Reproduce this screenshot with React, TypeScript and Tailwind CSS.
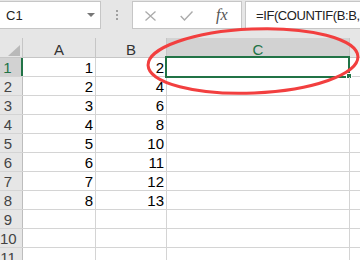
import React from "react";

const rows: [number | null, number | null][] = [
  [1, 2],
  [2, 4],
  [3, 6],
  [4, 8],
  [5, 10],
  [6, 11],
  [7, 12],
  [8, 13],
  [null, null],
  [null, null],
  [null, null],
];

const App = () => {
  return (
    <div className="relative h-[260px] w-[360px] overflow-hidden bg-white font-['Liberation_Sans',Arial,sans-serif] text-black">
      {/* name box + formula bar */}
      <div className="flex h-[38px] items-start bg-[#e6e6e6] pt-[1px]">
        <div className="flex h-[28px] w-[101px] shrink-0 items-center justify-between border-y border-r border-[#c6c6c6] bg-white pl-[6px] pr-[5px] text-[13px] text-[#222]">
          <span className="pt-[2px]">C1</span>
          <span className="h-0 w-0 border-x-[4px] border-t-[4px] border-x-transparent border-t-[#777]" />
        </div>
        <div className="flex h-[28px] w-[31px] shrink-0 flex-col items-center justify-center gap-[2px]">
          <span className="h-[2px] w-[2px] bg-[#a0a0a0]" />
          <span className="h-[2px] w-[2px] bg-[#a0a0a0]" />
          <span className="h-[2px] w-[2px] bg-[#a0a0a0]" />
        </div>
        <div className="flex h-[28px] w-[110px] shrink-0 items-center border border-[#c6c6c6] bg-white pl-[12px]">
          <svg width="11" height="10" viewBox="0 0 11 10" className="mt-[2px]">
            <path d="M0.5 0.5 L10.5 9.5 M10.5 0.5 L0.5 9.5" stroke="#ababab" strokeWidth="1.3" fill="none" />
          </svg>
          <svg width="13" height="10" viewBox="0 0 13 10" className="ml-[24px] mt-[2px]">
            <path d="M0.7 5 L4.5 9 L12.5 0.6" stroke="#ababab" strokeWidth="1.4" fill="none" />
          </svg>
          <span className="ml-[23px] font-['Liberation_Serif',serif] text-[16px] italic text-[#555]">fx</span>
        </div>
        <div className="ml-[3px] flex h-[28px] flex-1 items-center overflow-hidden whitespace-nowrap border-y border-l border-[#c6c6c6] bg-white pl-[10px] pt-[2px] text-[13px] tracking-[-0.4px] text-[#222]">
          =IF(COUNTIF(B:B,C1)&gt;0,&quot;&quot;)
        </div>
      </div>

      {/* column headers */}
      <div className="flex h-[20px] border-b border-[#c6c6c6] bg-[#e6e6e6] text-[15px] leading-[23px] text-[#333]">
        <div className="flex w-[23px] shrink-0 items-end justify-end border-r border-[#c6c6c6] pb-[1px] pr-[2px]">
          <svg width="12" height="11" viewBox="0 0 12 11">
            <polygon points="12,0 12,11 0,11" fill="#b9b9b9" />
          </svg>
        </div>
        <div className="w-[73px] shrink-0 border-r border-[#c6c6c6] text-center">A</div>
        <div className="w-[71px] shrink-0 border-r border-[#c6c6c6] text-center">B</div>
        <div className="w-[183px] shrink-0 border-r border-[#c6c6c6] bg-[#d2d2d2] text-center text-[#217346]">C</div>
        <div className="flex-1" />
      </div>

      {/* grid */}
      {rows.map(([a, b], i) => (
        <div key={i} className="flex h-[19px] border-b border-[#d4d4d4] text-[15px] leading-[20px]">
          <div
            className={
              i === 0
                ? "w-[23px] shrink-0 border-r-2 border-[#217346] bg-[#d2d2d2] pr-[6px] text-center text-[#217346]"
                : "w-[23px] shrink-0 border-r border-[#bdbdbd] bg-[#e6e6e6] pr-[6px] text-center text-[#444]"
            }
          >
            {i + 1}
          </div>
          <div className="w-[73px] shrink-0 border-r border-[#d4d4d4] pr-[2px] text-right">{a}</div>
          <div className="w-[71px] shrink-0 border-r border-[#d4d4d4] pr-[2px] text-right">{b}</div>
          <div className="relative w-[183px] shrink-0 border-r border-[#d4d4d4]">
            {i === 0 && (
              <>
                <div className="absolute left-[-2px] top-[-2px] h-[22px] w-[185px] border-2 border-[#217346]" />
                <div className="absolute left-[179px] top-[15px] h-[6px] w-[6px] border border-white bg-[#217346]" />
              </>
            )}
          </div>
          <div className="flex-1" />
        </div>
      ))}

      {/* red annotation */}
      <svg className="pointer-events-none absolute left-0 top-0" width="360" height="260" viewBox="0 0 360 260">
        <ellipse cx="253" cy="61" rx="105" ry="32" transform="rotate(-2.4 253 61)" fill="none" stroke="#f23f3f" strokeWidth="3" />
      </svg>
    </div>
  );
};

export default App;
